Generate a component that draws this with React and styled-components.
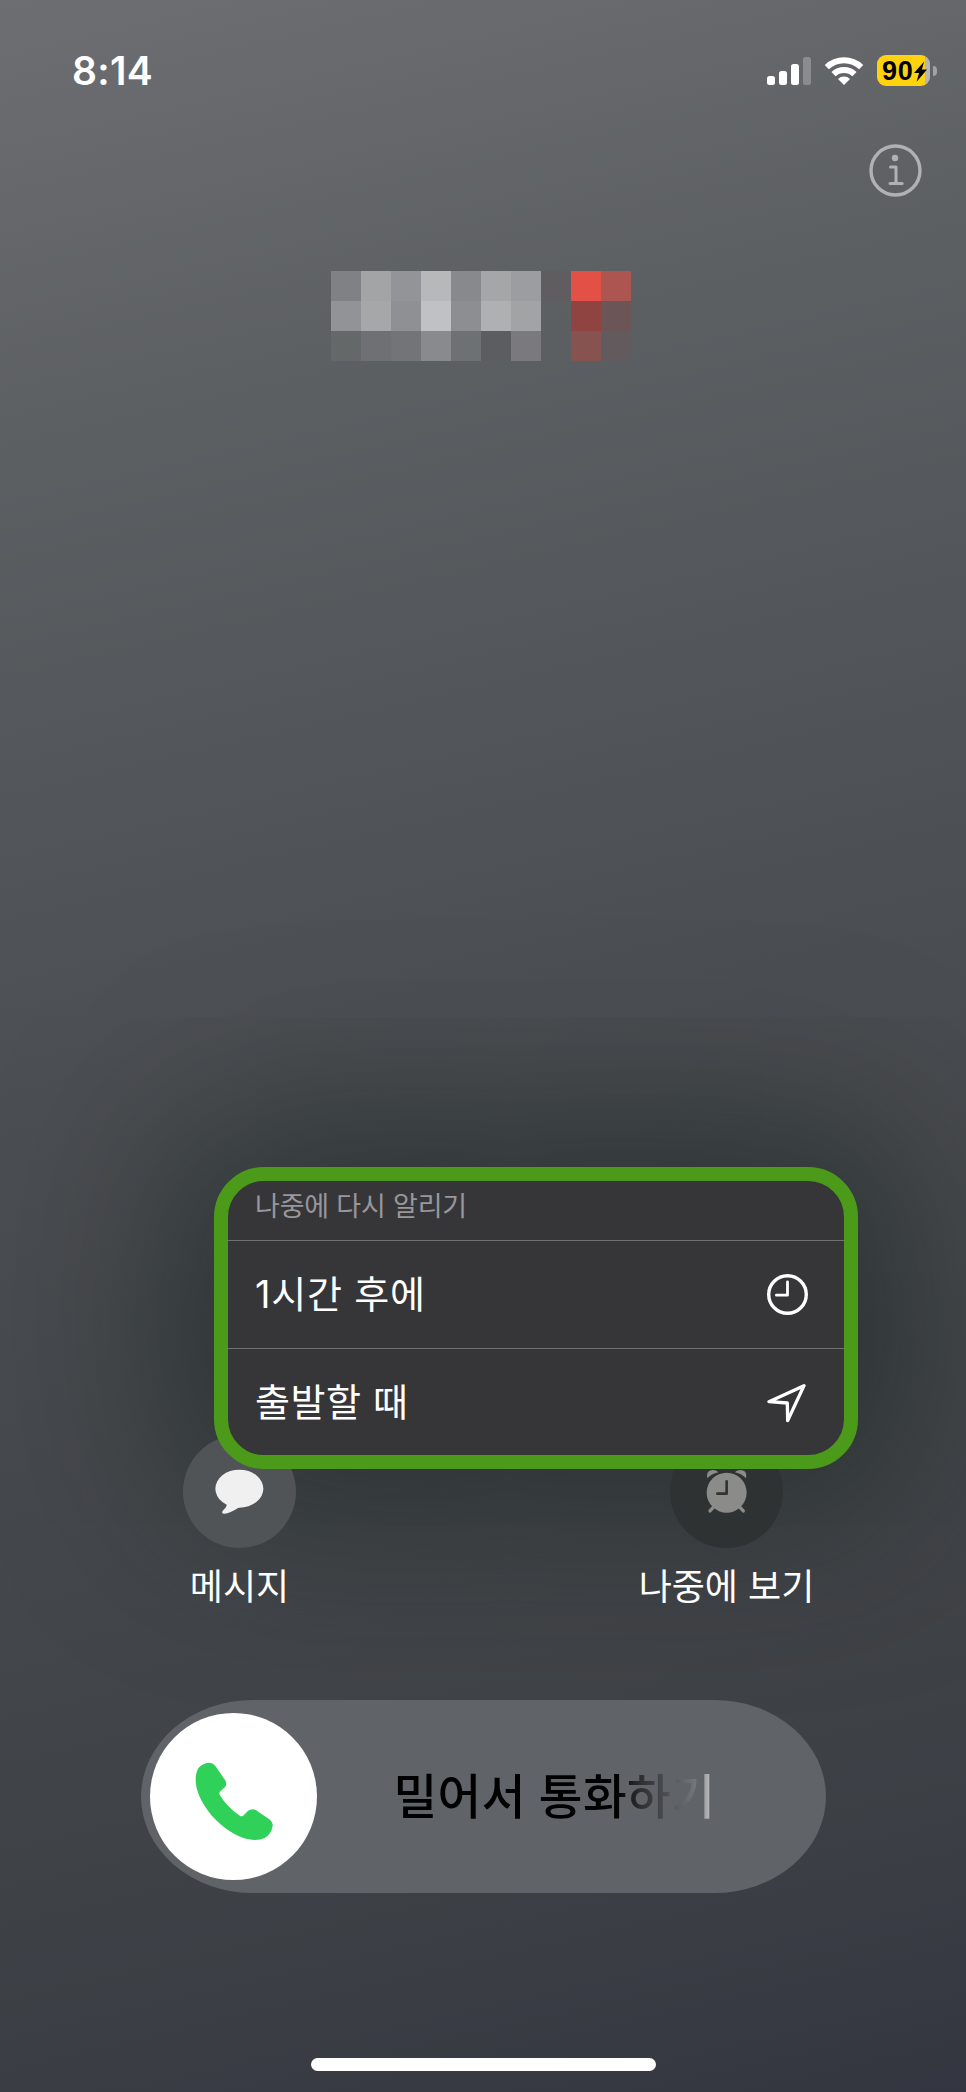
import styled, { createGlobalStyle } from 'styled-components';

const GlobalStyle = createGlobalStyle`
    * {
        box-sizing:border-box;
    }
    body {
        margin:0;
        background:#404347;
    }
    svg {
        display:block;
        flex-shrink:0;
    }
`

const Screen = styled.div`
    position:relative;
    display:flex;
    flex-direction:column;
    width:966px;
    height:2092px;
    overflow:hidden;
    color:#fff;
    font-family:Inter, "Noto Sans CJK KR", sans-serif;
    background:linear-gradient(167deg, #6d6e71 0%, #5e6164 17%, #54575b 32%, #4b4e52 48%, #46494d 62%, #404347 78%, #3b3e44 89%, #333640 100%);
`

const StatusBar = styled.header`
    display:flex;
    justify-content:space-between;
    align-items:center;
    height:141px;
    padding:0 29px 0 72px;
`

const Time = styled.span`
    font-size:39px;
    font-weight:600;
    line-height:40px;
    letter-spacing:0.3px;
`

const StatusIcons = styled.div`
    display:flex;
    align-items:center;
    gap:13px;
`

const Signal = styled.div`
    display:flex;
    align-items:flex-end;
    gap:4px;
    height:29px;
`

const Bar = styled.div`
    width:8px;
    height:${props => props.$height}px;
    border-radius:2.5px;
    background:${props => props.$dim ? "rgba(255,255,255,0.25)" : "#fff"};
`

const Battery = styled.div`
    display:flex;
    align-items:center;
    gap:3px;
`

const BatteryBody = styled.div`
    display:flex;
    align-items:center;
    width:53px;
    height:31px;
    padding:1px 0 0 5px;
    border-radius:9px;
    color:#000;
    font-family:"Liberation Sans", sans-serif;
    font-size:27px;
    font-weight:700;
    letter-spacing:0.8px;
    background:linear-gradient(90deg, #ffd20f 48.5px, #b4b5b6 48.5px);
`

const BatteryCap = styled.div`
    width:4px;
    height:10px;
    border-radius:0 5px 5px 0;
    background:#a1a2a4;
`

const InfoRow = styled.div`
    display:flex;
    justify-content:flex-end;
    height:129.5px;
    padding:3px 44.5px 0 0;
`

const Caller = styled.div`
    display:grid;
    grid-template-columns:repeat(10, 30px);
    grid-auto-rows:30px;
    margin-left:330.5px;
`

const Pixel = styled.div`
    background:${props => props.$color};
`

// dimmed area around the open menu
const MenuShade = styled.div`
    position:absolute;
    left:215px;
    top:1167px;
    width:643px;
    height:302px;
    border-radius:50px;
    box-shadow:0 0 170px 45px rgba(24,34,32,0.58);
`

const Menu = styled.div`
    position:absolute;
    left:214px;
    top:1166.5px;
    width:643.5px;
    height:302.5px;
    border:14.5px solid #4c9a1a;
    border-radius:50px;
    background:#363638;
    overflow:hidden;
`

const MenuTitle = styled.div`
    height:59px;
    padding:9.5px 27px 0;
    color:#97979c;
    font-size:27px;
    line-height:34px;
    letter-spacing:-0.2px;
`

const MenuItem = styled.div`
    display:flex;
    justify-content:space-between;
    align-items:center;
    height:108px;
    padding:0 36px 0 27px;
    border-top:1px solid #717173;
    font-size:38px;
    line-height:50px;
`

const ItemText = styled.span`
    letter-spacing:${props => props.$spacing || 0}px;
`

const Actions = styled.div`
    position:relative;
    display:flex;
    justify-content:space-between;
    margin-top:1074.5px;
    padding:0 139.5px;
`

const Action = styled.div`
    display:flex;
    flex-direction:column;
    align-items:center;
    width:200px;
    font-size:36px;
    line-height:50px;
    gap:14px;
`

const ActionCircle = styled.div`
    display:flex;
    align-items:center;
    justify-content:center;
    width:113px;
    height:113px;
    border-radius:50%;
    background:${props => props.$dim ? "#2e3232" : "#505456"};
`

const Slider = styled.div`
    position:relative;
    display:flex;
    align-items:center;
    width:685px;
    height:193px;
    margin:87.5px 0 0 141px;
    padding-left:9px;
    border-radius:112px / 96.5px;
    background:#606368;
`

const Knob = styled.div`
    display:flex;
    align-items:center;
    justify-content:center;
    width:167px;
    height:167px;
    padding:11px 0 0 2px;
    border-radius:50%;
    background:#fff;
`

const SlideText = styled.span`
    margin:1px 0 0 76.5px;
    font-size:47.5px;
    font-weight:500;
    line-height:64px;
    letter-spacing:0.4px;
    color:transparent;
    background:linear-gradient(90deg, #000 0, #000 222px, #2c2e30 246px, #505357 276px, #74777b 302px, #c4c5c7 318px);
    background-clip:text;
    -webkit-background-clip:text;
`

const HomeBar = styled.div`
    width:345px;
    height:13px;
    margin:165.5px 0 0 311px;
    border-radius:7px;
    background:#fff;
`

const pixels = [
    "#808184", "#a3a4a6", "#939498", "#b7b8ba", "#88898c", "#a5a6a8", "#9c9da0", "#605d60", "#e25046", "#ad5651",
    "#929396", "#a6a7a9", "#8f9094", "#c0c1c4", "#8d8e92", "#afb0b2", "#a2a3a5", "transparent", "#8f4442", "#6c5557",
    "#656869", "#6f7073", "#737477", "#898a8d", "#6d7173", "#5c5d60", "#7a7a7e", "transparent", "#875350", "#625b5e",
]

const WifiIcon = () => (
    <svg width="40" height="30" viewBox="0 0 40 30" fill="none" stroke="#fff" strokeWidth="6">
        <path d="M2.8 11.1a25 25 0 0 1 34.4 0" />
        <path d="M9.5 18.1a15.3 15.3 0 0 1 21 0" />
        <path d="M20 29l-6-6.1a8.6 8.6 0 0 1 12 0z" fill="#fff" stroke="none" />
    </svg>
)

const BoltIcon = () => (
    <svg width="13" height="21" viewBox="0 0 13 21">
        <path d="M10.2 0.5L0 12h5L2.6 20.8L13 8.6H7.9z" fill="#000" />
    </svg>
)

const InfoIcon = () => (
    <svg width="53" height="53" viewBox="0 0 53 53" fill="none" stroke="#b0b1b5">
        <circle cx="26.5" cy="26.5" r="24.5" strokeWidth="3.4" />
        <circle cx="26" cy="14" r="3.2" fill="#b0b1b5" stroke="none" />
        <path d="M21.5 23H27V39M21 39.5H33.2" strokeWidth="3" strokeLinecap="round" strokeLinejoin="round" />
    </svg>
)

const ClockIcon = () => (
    <svg width="41" height="41" viewBox="0 0 41 41" fill="none" stroke="#fff">
        <circle cx="20.5" cy="20.5" r="18.8" strokeWidth="3.4" />
        <path d="M20.5 8V21.2H9.4" strokeWidth="2.8" strokeLinecap="round" strokeLinejoin="round" />
    </svg>
)

const ArrowIcon = () => (
    <svg width="41" height="41" viewBox="680 698 123 123" fill="none" stroke="#fff">
        <path d="M791 709L686 757L741 761L742 814Z" strokeWidth="10" strokeLinejoin="round" />
    </svg>
)

const BubbleIcon = () => (
    <svg width="48.7" height="45.3" viewBox="164 88 146 136" fill="#f0f0f0">
        <ellipse cx="237" cy="147" rx="72" ry="57" />
        <path d="M199 190Q201 202 187 213Q182 221 191 222Q206 223 237 203Z" />
    </svg>
)

const AlarmIcon = () => (
    <svg width="41.3" height="44.7" viewBox="318 90 124 134" fill="#8b8b89">
        <circle cx="380" cy="161" r="60" />
        <path d="M322 118Q317 94 338 93Q350 93 355 100Q334 105 322 118Z" />
        <path d="M438 118Q443 94 422 93Q410 93 405 100Q426 105 438 118Z" />
        <path d="M340 205L330 216M420 205L430 216" stroke="#8b8b89" strokeWidth="10" strokeLinecap="round" />
        <path d="M380 127V164H352" fill="none" stroke="#303434" strokeWidth="8" strokeLinecap="round" strokeLinejoin="round" />
    </svg>
)

const PhoneIcon = () => (
    <svg width="79" height="79" viewBox="196 244 236 238">
        <path
            d="M206 261Q221 246 240 246Q250 247 257 257L286 299Q293 311 285 320L270 334Q267 339 270 344Q292 380 330 406Q335 409 340 406L355 391Q366 383 379 389L420 417Q431 426 429 437Q425 461 405 473Q385 482 357 477Q300 465 245 405Q197 347 197 297Q197 275 206 261Z"
            fill="#30d158"
        />
    </svg>
)

const App = () => {
  return (
    <Screen>
        <GlobalStyle/>
        <StatusBar>
            <Time>8:14</Time>
            <StatusIcons>
                <Signal>
                    <Bar $height={9}/>
                    <Bar $height={14}/>
                    <Bar $height={21}/>
                    <Bar $height={28} $dim/>
                </Signal>
                <WifiIcon/>
                <Battery>
                    <BatteryBody>
                        90
                        <BoltIcon/>
                    </BatteryBody>
                    <BatteryCap/>
                </Battery>
            </StatusIcons>
        </StatusBar>
        <InfoRow>
            <InfoIcon/>
        </InfoRow>
        <Caller>
            {pixels.map((color,i)=>(
                <Pixel key={i} $color={color}/>
            ))}
        </Caller>
        <MenuShade/>
        <Actions>
            <Action>
                <ActionCircle>
                    <BubbleIcon/>
                </ActionCircle>
                메시지
            </Action>
            <Action>
                <ActionCircle $dim>
                    <AlarmIcon/>
                </ActionCircle>
                나중에 보기
            </Action>
        </Actions>
        <Slider>
            <Knob>
                <PhoneIcon/>
            </Knob>
            <SlideText>밀어서 통화하기</SlideText>
        </Slider>
        <HomeBar/>
        <Menu>
            <MenuTitle>나중에 다시 알리기</MenuTitle>
            <MenuItem>
                <ItemText $spacing={0.8}>1시간 후에</ItemText>
                <ClockIcon/>
            </MenuItem>
            <MenuItem>
                <ItemText $spacing={0.6}>출발할 때</ItemText>
                <ArrowIcon/>
            </MenuItem>
        </Menu>
    </Screen>
  )
}

export default App
